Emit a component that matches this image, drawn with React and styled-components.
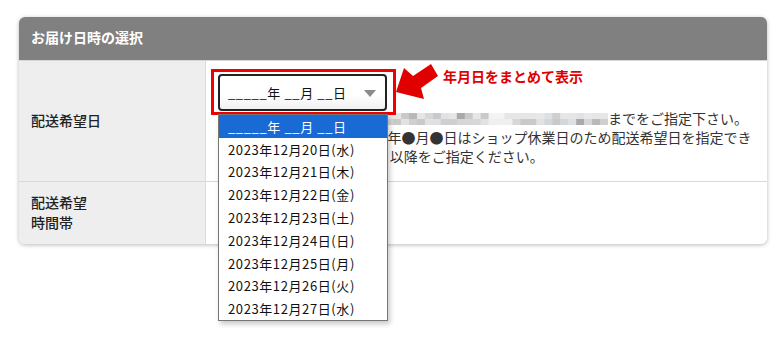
import React from "react";
import styled, { createGlobalStyle } from "styled-components";

const Global = createGlobalStyle`
  html, body { margin: 0; padding: 0; background: #fff; }
  body { min-height: 343px; font-family: "Noto Sans CJK JP", "Noto Sans", sans-serif; color: #222; }
`;

const Page = styled.div`
  min-height: 343px;
  box-sizing: border-box;
  padding: 17px 15px 40px 19px;
`;

const Card = styled.section`
  width: 748px;
  border-radius: 6px;
  background: #fff;
  box-shadow: 0 1px 4px rgba(0, 0, 0, 0.28);
`;

const Header = styled.h2`
  margin: 0;
  box-sizing: border-box;
  height: 44px;
  display: flex;
  align-items: center;
  padding: 0 0 4px 12px;
  background: #808080;
  color: #fff;
  font-size: 14px;
  font-weight: 700;
  border-radius: 6px 6px 0 0;
  border-bottom: 1px solid #d6d6d6;
`;

const Row = styled.div`
  display: grid;
  grid-template-columns: 187px 1fr;
  border-top: ${(p) => (p.$first ? "none" : "1px solid #d8d8d8")};
  &:last-child > * { border-bottom-left-radius: 6px; }
  &:last-child > *:last-child { border-bottom-left-radius: 0; border-bottom-right-radius: 6px; }
`;

const Label = styled.div`
  background: #eeeeee;
  border-right: 1px solid #dcdcdc;
  display: flex;
  align-items: center;
  padding: 0 12px 2px;
  font-size: 14px;
  font-weight: 500;
  line-height: 20px;
  color: #222;
`;

const Cell = styled.div`
  padding: ${(p) => p.$pad || "13px 12px 15px 12px"};
  min-height: ${(p) => p.$minH || "auto"};
`;

const SelectWrap = styled.div`
  position: relative;
  width: 169px;
`;

const Select = styled.div`
  box-sizing: border-box;
  height: 37px;
  border: 2px solid #222;
  border-radius: 4px;
  background: linear-gradient(#ffffff 0%, #ffffff 55%, #f1f1f1 100%);
  display: flex;
  align-items: center;
  justify-content: space-between;
  padding: 0 9px 0 8px;
  font-size: 13px;
  letter-spacing: 0.6px;
  color: #111;
`;

const Caret = styled.span`
  width: 0;
  height: 0;
  border-left: 6px solid transparent;
  border-right: 6px solid transparent;
  border-top: 7px solid #8a8a8a;
  margin-top: 2px;
`;

const Highlight = styled.div`
  position: absolute;
  left: -7px;
  right: -9px;
  top: -5px;
  bottom: -4px;
  border: 3px solid #f00000;
  pointer-events: none;
`;

const Callout = styled.div`
  position: absolute;
  left: 176px;
  top: -12px;
  display: flex;
  align-items: flex-start;
  gap: 3px;
`;

const CalloutText = styled.span`
  color: #e00000;
  font-size: 14px;
  font-weight: 700;
  white-space: nowrap;
  margin-top: 4px;
`;

const Listbox = styled.ul`
  position: absolute;
  z-index: 2;
  left: 0;
  top: calc(100% + 3px);
  width: 170px;
  box-sizing: border-box;
  margin: 0;
  padding: 0;
  list-style: none;
  background: #fff;
  border: 1px solid #767676;
  box-shadow: 2px 3px 5px rgba(0, 0, 0, 0.22);
`;

const Option = styled.li`
  height: 22.8px;
  display: flex;
  align-items: center;
  padding-left: 9px;
  font-size: 13px;
  letter-spacing: 0.6px;
  color: ${(p) => (p.$selected ? "#fff" : "#111")};
  background: ${(p) => (p.$selected ? "#1a6ad6" : "transparent")};
  white-space: nowrap;
`;

const Notes = styled.div`
  margin-top: -2px;
  font-size: 14px;
  line-height: 19px;
  color: #333;
  white-space: nowrap;
`;

const NoteLine = styled.div``;

const Mosaic = styled.svg`
  display: inline-block;
  vertical-align: -1px;
`;

const palette = ["#e2e2e2", "#d7d7d7", "#cfcfcf", "#dde0e4", "#c9c9c9", "#e8e8e8", "#b9b9b9", "#d3d6da", "#ececec", "#a9a9a9"];

function Pixelated() {
  const cols = 49;
  const w = 390;
  const cw = w / cols;
  let seed = 7;
  const rnd = () => {
    seed = (seed * 9301 + 49297) % 233280;
    return seed / 233280;
  };
  const rects = [];
  for (let r = 0; r < 2; r++) {
    for (let c = 0; c < cols; c++) {
      const x = c * cw;
      let color = palette[Math.floor(rnd() * palette.length)];
      if (x > 270 && x < 288) color = r === 0 ? "#f4f4f4" : "#efefef";
      if (r === 0 && rnd() > 0.5) color = "#e6e6e6";
      rects.push(<rect key={`${r}-${c}`} x={x} y={r * 6} width={cw + 0.5} height={6} fill={color} />);
    }
  }
  return (
    <Mosaic width={w} height={12} viewBox={`0 0 ${w} 12`}>
      {rects}
    </Mosaic>
  );
}

function Arrow() {
  return (
    <svg width="46" height="40" viewBox="0 0 46 40">
      <polygon points="2,30 10,6 19,14 37,2 44,14 27,26 30,37" fill="#e00000" />
    </svg>
  );
}

const dates = [
  "2023年12月20日(水)",
  "2023年12月21日(木)",
  "2023年12月22日(金)",
  "2023年12月23日(土)",
  "2023年12月24日(日)",
  "2023年12月25日(月)",
  "2023年12月26日(火)",
  "2023年12月27日(水)",
];

export default function App() {
  return (
    <>
      <Global />
      <Page>
        <Card>
          <Header>お届け日時の選択</Header>
          <Row $first>
            <Label>配送希望日</Label>
            <Cell>
              <SelectWrap>
                <Select>
                  <span>_____年 __月 __日</span>
                  <Caret />
                </Select>
                <Highlight />
                <Callout>
                  <Arrow />
                  <CalloutText>年月日をまとめて表示</CalloutText>
                </Callout>
                <Listbox>
                  <Option $selected>_____年 __月 __日</Option>
                  {dates.map((d) => (
                    <Option key={d}>{d}</Option>
                  ))}
                </Listbox>
              </SelectWrap>
              <Notes>
                <NoteLine>
                  <Pixelated />までをご指定下さい。
                </NoteLine>
                <NoteLine>※2023年12月29日 ～ 2024年●月●日はショップ休業日のため配送希望日を指定でき</NoteLine>
                <NoteLine>ませんので、2024年1月4日以降をご指定ください。</NoteLine>
              </Notes>
            </Cell>
          </Row>
          <Row>
            <Label>
              配送希望
              <br />
              時間帯
            </Label>
            <Cell $pad="0 12px" $minH="62px" />
          </Row>
        </Card>
      </Page>
    </>
  );
}
